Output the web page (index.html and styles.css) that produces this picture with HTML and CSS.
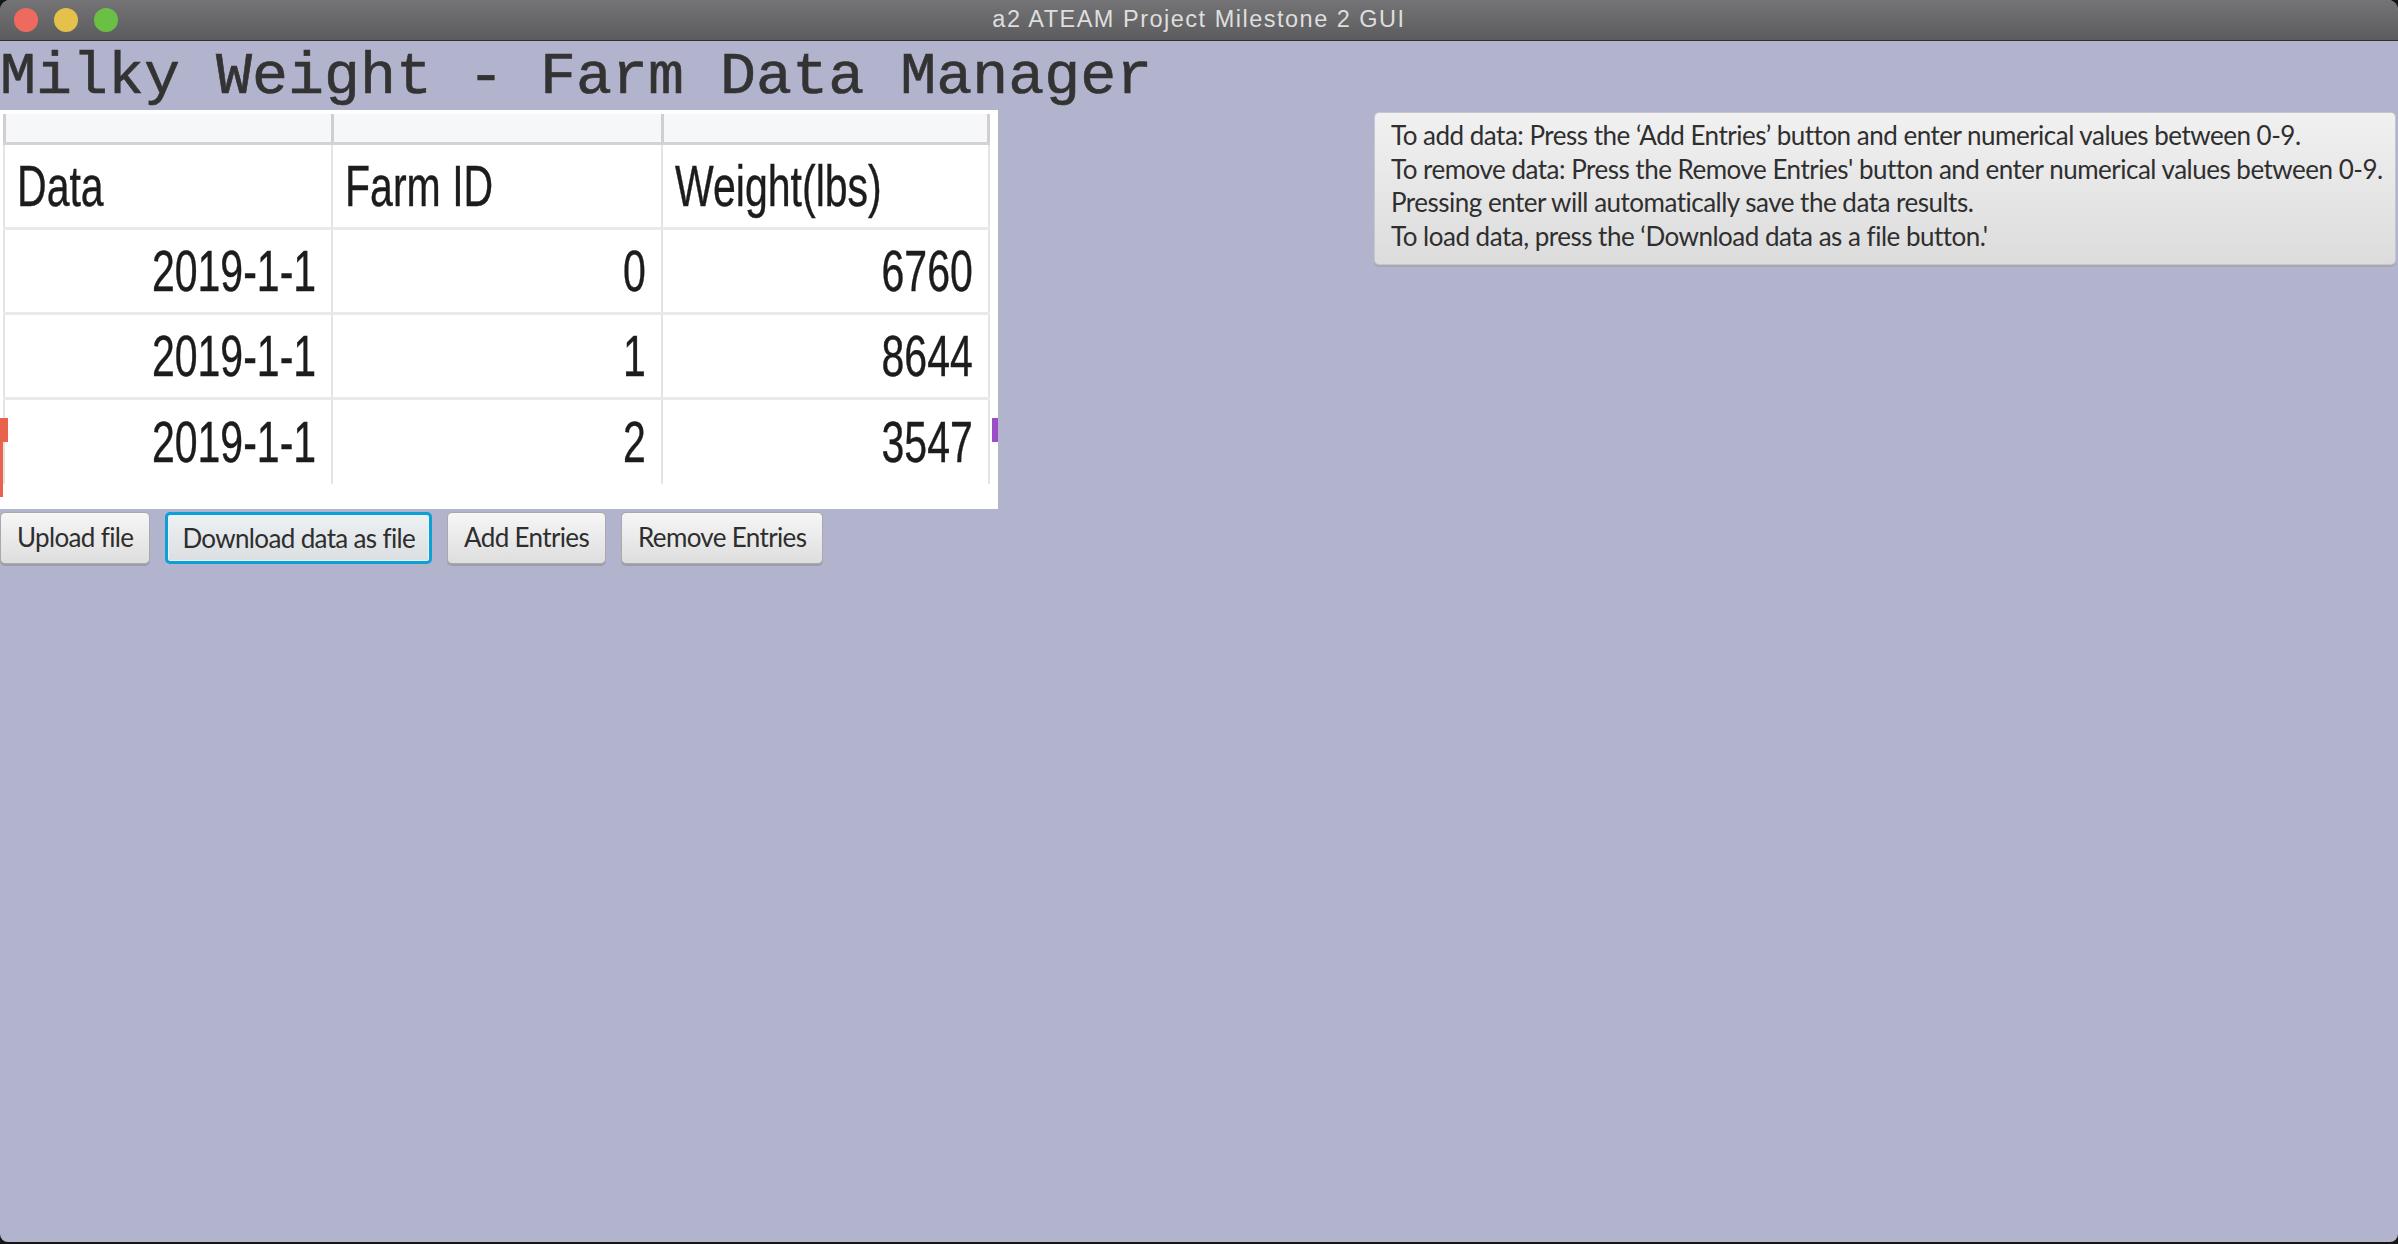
FILE: index.html
```html
<!DOCTYPE html>
<html lang="en">
<head>
<meta charset="utf-8">
<title>a2 ATEAM Project Milestone 2 GUI</title>
<link rel="stylesheet" href="styles.css">
</head>
<body>
<div class="window">
  <div class="titlebar">
    <div class="lights">
      <span class="light red"></span>
      <span class="light yellow"></span>
      <span class="light green"></span>
    </div>
    <div class="wtitle">a2 ATEAM Project Milestone 2 GUI</div>
    <div class="spacer"></div>
  </div>
  <div class="content">
    <h1 class="apptitle">Milky Weight - Farm Data Manager</h1>
    <div class="main">
      <div class="leftcol">
        <div class="tbl">
          <div class="tbl-strip">
            <div class="strip-cell"></div>
            <div class="strip-cell"></div>
            <div class="strip-cell last"></div>
          </div>
          <div class="tbl-row head">
            <div class="cell l"><span class="txt">Data</span></div>
            <div class="cell l"><span class="txt">Farm ID</span></div>
            <div class="cell l last"><span class="txt">Weight(lbs)</span></div>
          </div>
          <div class="tbl-row">
            <div class="cell r"><span class="txt">2019-1-1</span></div>
            <div class="cell r"><span class="txt">0</span></div>
            <div class="cell r last"><span class="txt">6760</span></div>
          </div>
          <div class="tbl-row">
            <div class="cell r"><span class="txt">2019-1-1</span></div>
            <div class="cell r"><span class="txt">1</span></div>
            <div class="cell r last"><span class="txt">8644</span></div>
          </div>
          <div class="tbl-row final">
            <div class="cell r"><span class="txt">2019-1-1</span></div>
            <div class="cell r"><span class="txt">2</span></div>
            <div class="cell r last"><span class="txt">3547</span></div>
          </div>
          <span class="mark-red"></span>
          <span class="mark-purple"></span>
        </div>
        <div class="buttons">
          <button class="btn">Upload file</button>
          <button class="btn focused">Download data as file</button>
          <button class="btn">Add Entries</button>
          <button class="btn">Remove Entries</button>
        </div>
      </div>
      <div class="info">
        <p>To add data: Press the ‘Add Entries’ button and enter numerical values between 0-9.</p>
        <p>To remove data: Press the Remove Entries' button and enter numerical values between 0-9.</p>
        <p>Pressing enter will automatically save the data results.</p>
        <p>To load data, press the ‘Download data as a file button.'</p>
      </div>
    </div>
  </div>
</div>
</body>
</html>
```

FILE: styles.css
```css
* { box-sizing: border-box; }
html, body {
  margin: 0;
  padding: 0;
  background: #161616;
  width: 2398px;
  height: 1244px;
  overflow: hidden;
}
.window {
  width: 2398px;
  height: 1242px;
  background: #b2b3cc;
  border-radius: 10px 10px 8px 8px;
  overflow: hidden;
  display: flex;
  flex-direction: column;
}
.titlebar {
  height: 41px;
  flex: 0 0 41px;
  background: linear-gradient(#747476, #5c5c5e);
  border-bottom: 1px solid #2e2e30;
  display: grid;
  grid-template-columns: 1fr auto 1fr;
  align-items: center;
}
.lights {
  display: flex;
  gap: 16px;
  padding-left: 14px;
  padding-bottom: 1px;
}
.light {
  width: 24px;
  height: 24px;
  border-radius: 50%;
  display: block;
}
.red { background: #ef6a5e; }
.yellow { background: #e4c14b; }
.green { background: #6ac044; }
.wtitle {
  font-family: "Liberation Sans", Arial, sans-serif;
  font-size: 23.5px;
  letter-spacing: 1.5px;
  color: #dedede;
  padding-bottom: 1px;
}
.content {
  padding-top: 3px;
  flex: 1;
}
.apptitle {
  margin: 0;
  font-family: "Liberation Mono", "Courier New", monospace;
  font-weight: normal;
  font-size: 60px;
  line-height: 66px;
  color: #333333;
  white-space: nowrap;
  -webkit-text-stroke: 0.6px #333333;
}
.main {
  display: flex;
  justify-content: space-between;
  align-items: flex-start;
}
.leftcol {
  display: flex;
  flex-direction: column;
  gap: 3px;
}
.tbl {
  position: relative;
  width: 998px;
  height: 399px;
  background: #ffffff;
  padding-top: 4px;
  padding-left: 3px;
}
.tbl-strip {
  display: grid;
  grid-template-columns: 328px 330px 329px;
  width: 987px;
  height: 31px;
  background: #f6f7f9;
  border-bottom: 3px solid #d3d3d5;
}
.strip-cell {
  border-left: 3px solid #cfcfd1;
}
.strip-cell.last {
  border-right: 3px solid #cfcfd1;
}
.tbl-row {
  display: grid;
  grid-template-columns: 328px 330px 329px;
  width: 987px;
  height: 85px;
  border-bottom: 3px solid #e9e9e9;
}
.tbl-row.final { border-bottom: none; height: 84px; }
.cell {
  border-left: 2px solid #e4e4e4;
  display: flex;
  align-items: center;
  white-space: nowrap;
}
.cell.last { border-right: 2px solid #e4e4e4; }
.cell.l { justify-content: flex-start; padding-left: 12px; }
.cell.r { justify-content: flex-end; padding-right: 15px; }
.txt {
  display: inline-block;
  font-family: "Liberation Sans", Arial, sans-serif;
  font-size: 57px;
  line-height: 60px;
  color: #1c1c1c;
  transform: scaleX(0.72);
  -webkit-text-stroke: 0.4px #1c1c1c;
}
.cell.l .txt { transform-origin: left center; }
.cell.r .txt { transform-origin: right center; }
.mark-red {
  position: absolute;
  left: 0;
  top: 308px;
  width: 8px;
  height: 79px;
  background: linear-gradient(to right, #e9624b 0, #e9624b 3px, transparent 3px) , linear-gradient(#e9624b, #e9624b);
  background-size: 100% 100%, 8px 24px;
  background-repeat: no-repeat;
}
.mark-purple {
  position: absolute;
  right: 0;
  top: 308px;
  width: 6px;
  height: 24px;
  background: #9b4fc6;
}
.buttons {
  display: flex;
  gap: 15px;
}
.btn {
  font-family: Lato, "Liberation Sans", sans-serif;
  font-size: 26px;
  letter-spacing: -0.65px;
  color: #2e2e2e;
  height: 52px;
  padding: 0 16px 2px;
  border: 1px solid #a9a9ad;
  border-radius: 5px;
  background: linear-gradient(#f6f6f6, #dedede);
  box-shadow: 0 2px 0 #9d9daa;
  margin: 0;
  line-height: 1;
}
.btn.focused {
  border: 3px solid #0e9fd6;
  box-shadow: inset 0 0 0 1px #e8f3f8;
  padding: 0 14px 1px;
  background: linear-gradient(#eef1f3, #dcdfe1);
}
.info {
  margin-top: 2px;
  margin-right: 2px;
  width: 1022px;
  height: 153px;
  padding: 6px 16px 0;
  border: 1px solid #c6c6cc;
  border-radius: 5px;
  background: linear-gradient(#f1f1f1, #dcdcdc);
  box-shadow: 0 2px 0 #a7a7b4;
  font-family: Lato, "Liberation Sans", sans-serif;
  font-size: 26px;
  letter-spacing: -0.5px;
  line-height: 33.7px;
  color: #2f2f2f;
}
.info p {
  margin: 0;
  white-space: nowrap;
}
```
